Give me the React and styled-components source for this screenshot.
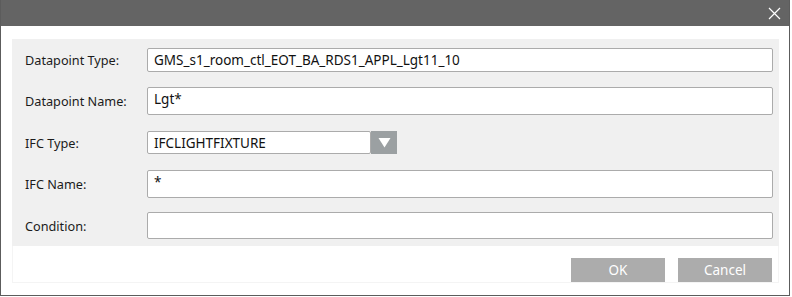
import React from 'react';
import styled, { createGlobalStyle } from 'styled-components';

const GlobalStyle = createGlobalStyle`
  html, body {
    margin: 0;
    padding: 0;
    background: #ffffff;
  }
  body {
    font-family: "Noto Sans", "Open Sans", Arial, sans-serif;
  }
`;

const Window = styled.div`
  width: 790px;
  height: 296px;
  box-sizing: border-box;
  border: 1px solid #5c5c5c;
  border-top: none;
  background: #ffffff;
  display: flex;
  flex-direction: column;
`;

const TitleBar = styled.div`
  height: 26px;
  flex-shrink: 0;
  background: #646464;
  display: flex;
  justify-content: flex-end;
  align-items: center;
  padding-right: 8px;
`;

const CloseButton = styled.div`
  width: 14px;
  height: 14px;
  display: flex;
  align-items: center;
  justify-content: center;
`;

const Body = styled.div`
  padding: 13px 10px 0 11px;
  display: flex;
  flex-direction: column;
`;

const Panel = styled.div`
  background: #f0f0f0;
  padding: 9px 6px 7px 13px;
  display: flex;
  flex-direction: column;
`;

const Row = styled.div`
  display: flex;
  align-items: center;
  height: ${({ h }) => h}px;
  margin-top: ${({ gap }) => gap || 0}px;
`;

const Label = styled.div`
  width: 122px;
  flex-shrink: 0;
  font-size: 12.7px;
  color: #1b1b1b;
`;

const TextBox = styled.div`
  flex: ${({ narrow }) => (narrow ? '0 0 224px' : '1')};
  height: 100%;
  box-sizing: border-box;
  background: #ffffff;
  border: 1px solid #ababab;
  border-radius: 2px;
  padding: 0 6px;
  display: flex;
  align-items: ${({ top }) => (top ? 'flex-start' : 'center')};
  padding-top: ${({ top }) => (top ? '2px' : '0')};
  font-size: 13.5px;
  color: #111111;
  white-space: nowrap;
`;

const ComboBox = styled.div`
  display: flex;
  height: 100%;
`;

const ComboArrow = styled.div`
  width: 26px;
  height: 100%;
  background: #9ba0a2;
  display: flex;
  align-items: center;
  justify-content: center;
`;

const Footer = styled.div`
  height: 37px;
  box-sizing: border-box;
  border: 1px solid #f4f4f4;
  border-top: none;
  display: flex;
  justify-content: flex-end;
  align-items: flex-end;
  gap: 13px;
  padding-right: 6px;
`;

const Button = styled.div`
  width: 94px;
  height: 24px;
  background: #acacac;
  color: #ffffff;
  font-size: 13.5px;
  display: flex;
  align-items: center;
  justify-content: center;
`;

function Field({ label, value, h, gap, top }) {
  return (
    <Row h={h} gap={gap}>
      <Label>{label}</Label>
      <TextBox top={top}>{value}</TextBox>
    </Row>
  );
}

export default function App() {
  return (
    <>
      <GlobalStyle />
      <Window>
        <TitleBar>
          <CloseButton>
            <svg width="13" height="13" viewBox="0 0 13 13">
              <path d="M1 1 L12 12 M12 1 L1 12" stroke="#ffffff" strokeWidth="1.2" />
            </svg>
          </CloseButton>
        </TitleBar>
        <Body>
          <Panel>
            <Field label="Datapoint Type:" value="GMS_s1_room_ctl_EOT_BA_RDS1_APPL_Lgt11_10" h={24} />
            <Field label="Datapoint Name:" value="Lgt*" h={28} gap={15} top />
            <Row h={23} gap={16}>
              <Label>IFC Type:</Label>
              <ComboBox>
                <TextBox narrow>IFCLIGHTFIXTURE</TextBox>
                <ComboArrow>
                  <svg width="13" height="11" viewBox="0 0 13 11">
                    <path d="M0.5 1 L12.5 1 L6.5 10.5 Z" fill="#ffffff" />
                  </svg>
                </ComboArrow>
              </ComboBox>
            </Row>
            <Field label="IFC Name:" value="*" h={28} gap={16} top />
            <Field label="Condition:" value="" h={27} gap={14} />
          </Panel>
          <Footer>
            <Button>OK</Button>
            <Button>Cancel</Button>
          </Footer>
        </Body>
      </Window>
    </>
  );
}
